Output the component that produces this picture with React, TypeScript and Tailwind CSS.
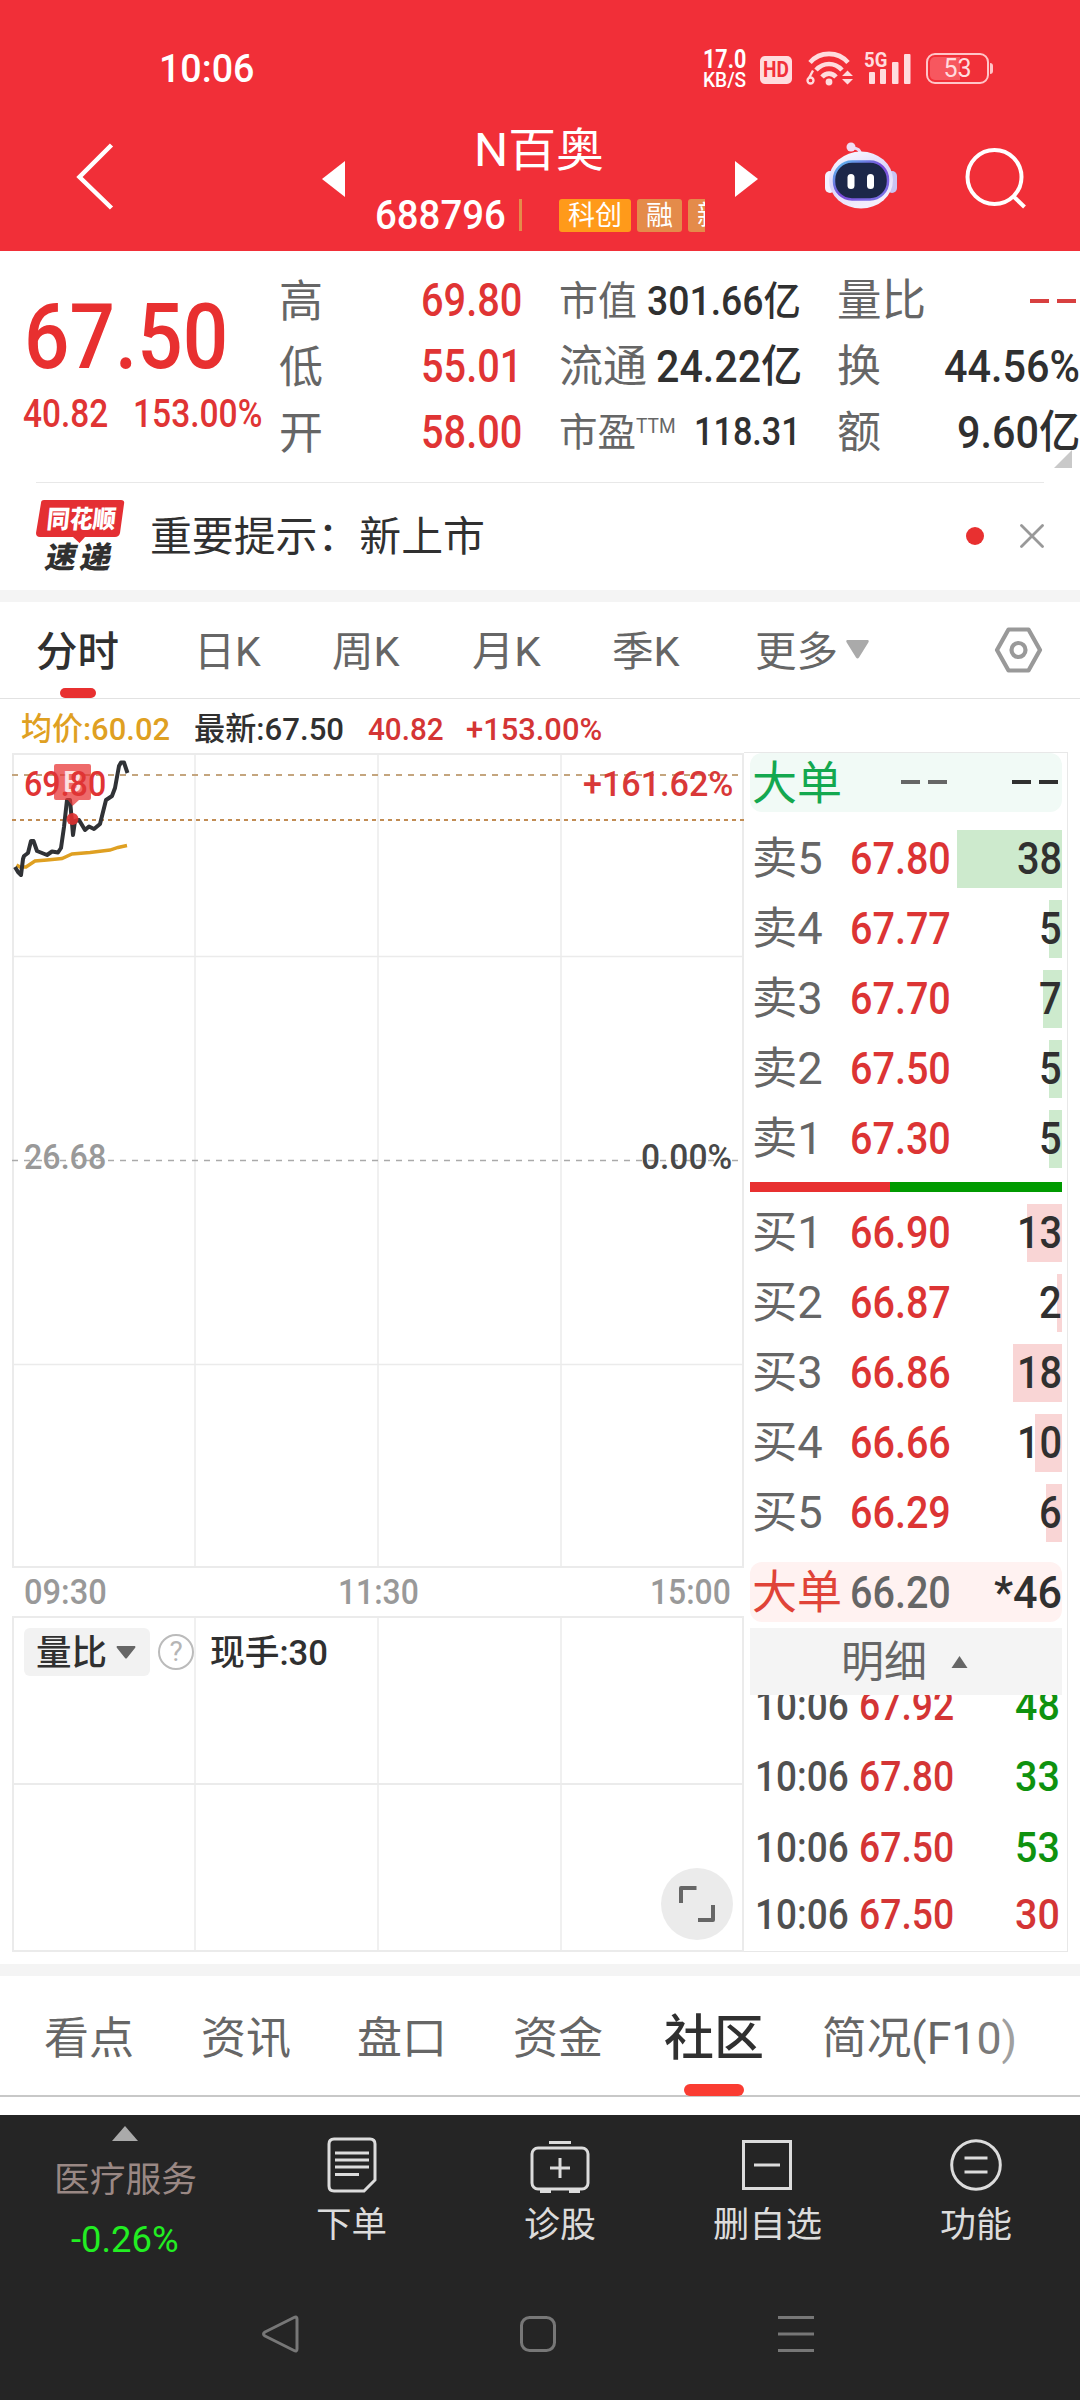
import { useLayoutEffect, useRef, useState } from "react";
import type { ReactNode } from "react";

/** A single line of text, condensed or widened to fill the width of its box. */
function Fit({ className = "", children }: { className?: string; children: ReactNode }) {
  const box = useRef<HTMLSpanElement>(null);
  const text = useRef<HTMLSpanElement>(null);
  const [scale, setScale] = useState(1);
  useLayoutEffect(() => {
    if (box.current && text.current) {
      setScale(box.current.clientWidth / text.current.offsetWidth);
    }
  }, []);
  return (
    <span ref={box} className={`block shrink-0 whitespace-nowrap ${className}`}>
      <span ref={text} className="inline-block origin-left" style={{ transform: `scaleX(${scale})` }}>
        {children}
      </span>
    </span>
  );
}

function StatusBar() {
  return (
    <div className="flex h-[110px] shrink-0 items-start">
      <Fit className="mt-[47px] ml-[159px] w-[95px] text-[38px] leading-[44px] font-medium">10:06</Fit>
      <div className="mt-[48px] ml-[449px] flex w-[44px] flex-col font-bold">
        <Fit className="w-[43px] text-[25px] leading-[24px]">17.0</Fit>
        <Fit className="w-[43px] text-[20px] leading-[17px] font-medium">KB/S</Fit>
      </div>
      <div className="mt-[56px] ml-[13px] flex h-[28px] w-[32px] justify-center rounded-[5px] bg-[#ffdcde]">
        <Fit className="w-[26px] text-[22px] leading-[28px] font-bold text-[#f12f38]">HD</Fit>
      </div>
      <svg className="mt-[50px] ml-[14px] h-[36px] w-[48px]" viewBox="0 0 48 36" fill="none" stroke="#ffdcde" strokeWidth="4.6">
        <path d="M4 12.5C14 1 32 1 42 12.5" />
        <path d="M10 20C17.5 12 28.500 12 36 20" />
        <path d="M16 27C20 22.500 26 22.500 30 27" />
        <circle cx="23" cy="32" r="3.4" fill="#ffdcde" stroke="none" />
        <circle cx="4.500" cy="30.500" r="3" strokeWidth="2.300" />
        <path d="M7 20.500L3 28" strokeWidth="2.300" />
        <path d="M36 26L41.500 20.500L47 26ZM36 29L41.500 34.500L47 29Z" fill="#ffdcde" stroke="none" />
      </svg>
      <div className="relative mt-[50px] ml-[10px] h-[36px] w-[50px]">
        <svg className="h-[36px] w-[50px]" viewBox="0 0 50 36" fill="#ffdcde">
          <rect x="5" y="22" width="6" height="12" rx="1" />
          <rect x="16" y="19" width="6" height="15" rx="1" />
          <rect x="28" y="12" width="6.500" height="22" rx="1" />
          <rect x="40" y="4" width="6.500" height="30" rx="1" />
        </svg>
        <div className="absolute top-[-1px] left-0">
          <Fit className="w-[23px] text-[21px] leading-[22px] font-bold text-[#ffdcde]">5G</Fit>
        </div>
      </div>
      <div className="mt-[53px] ml-[12px] flex h-[31px] w-[63px] justify-center rounded-[9px] border-[2.500px] border-[#ffc5c8] bg-[#f12f38] p-[2px]">
        <div className="flex w-full justify-center rounded-[5px] bg-linear-to-r from-[#f7575f] from-55% to-transparent to-55%">
          <Fit className="w-[28px] text-[25px] leading-[23px] text-[#ffdcde]">53</Fit>
        </div>
      </div>
      <div className="mt-[63px] ml-[1px] h-[11px] w-[3px] rounded-r bg-[#ffc5c8]" />
    </div>
  );
}

function Robot() {
  return (
    <svg className="mt-[31px] ml-[65px] h-[70px] w-[76px] shrink-0" viewBox="0 0 76 70">
      <defs>
        <linearGradient id="shell" x1="0" y1="0" x2="0.400" y2="1">
          <stop offset="0" stopColor="#ffffff" />
          <stop offset="0.550" stopColor="#dcd5fa" />
          <stop offset="1" stopColor="#f3eefc" />
        </linearGradient>
        <linearGradient id="ring" x1="0" y1="0" x2="1" y2="1">
          <stop offset="0" stopColor="#58c4f0" />
          <stop offset="0.500" stopColor="#7a48d8" />
          <stop offset="1" stopColor="#7b7be8" />
        </linearGradient>
      </defs>
      <path d="M37 15C38 9 35 7 28 7" fill="none" stroke="#ead9f5" strokeWidth="3" />
      <circle cx="28" cy="6" r="4.500" fill="#f0dcf4" />
      <rect x="2" y="30" width="10" height="22" rx="5" fill="#f4f2ff" />
      <rect x="64" y="30" width="10" height="22" rx="5" fill="#c9c4f2" />
      <ellipse cx="38" cy="39" rx="32" ry="28.500" fill="url(#shell)" />
      <rect x="11" y="20.500" width="54" height="38" rx="18" fill="#1c2749" stroke="url(#ring)" strokeWidth="2.500" />
      <rect x="24.500" y="33" width="7" height="15" rx="3.500" fill="#fff" />
      <rect x="44" y="33" width="7" height="15" rx="3.500" fill="#fff" />
    </svg>
  );
}

function Header() {
  return (
    <header className="flex h-[251px] shrink-0 flex-col bg-[#f12f38] text-white">
      <StatusBar />
      <div className="flex h-[141px] items-start">
        <svg className="mt-[32px] ml-[74px] h-[68px] w-[42px] shrink-0" viewBox="0 0 42 68" fill="none" stroke="#fff" strokeWidth="4.500">
          <path d="M37.500 3L5.500 35L37.500 66" />
        </svg>
        <svg className="mt-[51px] ml-[206px] h-[36px] w-[23px] shrink-0" viewBox="0 0 23 36" fill="#fff">
          <path d="M23 0V36L0 18Z" />
        </svg>
        <div className="mt-[9px] ml-[29px] flex w-[332px] shrink-0 flex-col">
          <Fit className="ml-[100px] w-[130px] text-[46px] leading-[62px]">N百奥</Fit>
          <div className="mt-[14px] flex h-[40px] items-center">
            <Fit className="ml-px w-[131px] text-[41px] leading-[44px] font-medium">688796</Fit>
            <span className="ml-[13px] h-[32px] w-[3px] bg-[#e48b4a]" />
            <div className="ml-[37px] flex h-[33px] w-[146px] gap-[6px] overflow-hidden text-[27px] leading-[34px]">
              <span className="w-[72px] shrink-0 rounded-[3px] bg-[#ff9a1a] text-center">科创</span>
              <span className="w-[45px] shrink-0 rounded-[3px] bg-[#e48b4a] text-center">融</span>
              <span className="w-[45px] shrink-0 rounded-[3px] bg-[#e48b4a] text-center">新</span>
            </div>
          </div>
        </div>
        <svg className="mt-[51px] ml-[29px] h-[36px] w-[23px] shrink-0" viewBox="0 0 23 36" fill="#fff">
          <path d="M0 0V36L23 18Z" />
        </svg>
        <Robot />
        <svg className="mt-[37px] ml-[65px] h-[64px] w-[64px] shrink-0" viewBox="0 0 64 64" fill="none" stroke="#fff" strokeWidth="4">
          <circle cx="30.500" cy="30" r="27" />
          <path d="M49 49L60.500 60" />
        </svg>
      </div>
    </header>
  );
}

function Dashes({ className }: { className: string }) {
  return (
    <div className={`flex h-[4px] w-[46px] shrink-0 justify-between ${className}`}>
      <span className="w-[19px] bg-current" />
      <span className="w-[19px] bg-current" />
    </div>
  );
}

function Quote() {
  return (
    <section className="flex h-[231px] shrink-0 text-[#e03434]">
      <div className="flex w-[279px] shrink-0 flex-col">
        <Fit className="mt-[41px] ml-[24px] w-[204px] text-[91px] leading-[90px] font-medium text-[#e83030]">67.50</Fit>
        <div className="mt-[10px] flex text-[38.500px] leading-[44px] font-medium">
          <Fit className="ml-[23px] w-[85px]">40.82</Fit>
          <Fit className="ml-[25px] w-[129px]">153.00%</Fit>
        </div>
      </div>
      <div className="mt-[17px] flex w-[280px] shrink-0 flex-col text-[46px] leading-[66px] font-medium">
        {[["高", "69.80"], ["低", "55.01"], ["开", "58.00"]].map(([k, v]) => (
          <div key={k} className="flex h-[66px]">
            <span className="w-[142px] text-[44px] leading-[68px] font-normal text-[#666]">{k}</span>
            <Fit className="w-[101px] leading-[65px]">{v}</Fit>
          </div>
        ))}
      </div>
      <div className="mt-[17px] flex w-[278px] shrink-0 flex-col leading-[67px] text-[#666]">
        <div className="flex h-[66px]">
          <Fit className="w-[78px] text-[40px] font-normal">市值</Fit>
          <Fit className="ml-[10px] w-[154px] text-[40px] font-medium text-[#303030]">301.66亿</Fit>
        </div>
        <div className="flex h-[66px]">
          <Fit className="w-[88px] text-[44px] font-normal">流通</Fit>
          <Fit className="ml-[9px] w-[146px] text-[44px] leading-[66px] font-medium text-[#303030]">24.22亿</Fit>
        </div>
        <div className="flex h-[66px]">
          <Fit className="w-[77px] text-[39px] font-normal">市盈</Fit>
          <Fit className="w-[40px] text-[21px] leading-[52px] font-normal">TTM</Fit>
          <Fit className="ml-[18px] w-[107px] text-[39px] leading-[65px] font-medium text-[#303030]">118.31</Fit>
        </div>
      </div>
      <div className="relative mt-[17px] flex w-[243px] shrink-0 flex-col text-[44px] leading-[67px] text-[#666]">
        <div className="flex h-[66px] items-center justify-between">
          <Fit className="w-[89px]">量比</Fit>
          <Dashes className="mr-[4px] text-[#d84040]" />
        </div>
        <div className="flex h-[66px] justify-between">
          <span>换</span>
          <Fit className="w-[136px] text-[45px] leading-[66px] font-medium text-[#303030]">44.56%</Fit>
        </div>
        <div className="flex h-[66px] justify-between">
          <span>额</span>
          <Fit className="w-[123px] text-[45px] leading-[65px] font-medium text-[#303030]">9.60亿</Fit>
        </div>
        <svg className="absolute top-[182px] left-[217px] h-[18px] w-[18px]" viewBox="0 0 18 18" fill="#c9c9c9">
          <path d="M18 0V18H0Z" />
        </svg>
      </div>
    </section>
  );
}

function Notice() {
  return (
    <section className="flex h-[108px] shrink-0 flex-col">
      <div className="mx-[36px] h-px bg-[#e8e8e8]" />
      <div className="flex h-[107px] items-center pr-[36px] pl-[36px]">
        <div className="flex h-[74px] w-[90px] shrink-0 flex-col">
          <div className="relative flex h-[37px] justify-center">
            <svg className="absolute h-[43px] w-[90px]" viewBox="0 0 90 43" fill="#e42f33">
              <path d="M8 0H85Q89 0 88 4L84 33Q83 37 79 37H49L43.500 43L37 37H4Q0 37 0 33L5 3Q5 0 8 0Z" />
            </svg>
            <div className="relative -skew-x-6">
              <Fit className="w-[69px] text-[25px] leading-[39px] font-black text-white">同花顺</Fit>
            </div>
          </div>
          <div className="ml-[10px] flex w-[66px] -skew-x-12 justify-between text-[30px] leading-[42px] font-black text-[#303030]">
            <Fit className="w-[31px]">速</Fit>
            <Fit className="w-[31px]">递</Fit>
          </div>
        </div>
        <Fit className="ml-[24px] w-[335px] text-[41px] leading-[58px] text-[#303030]">重要提示：新上市</Fit>
        <span className="-mt-[2px] ml-auto h-[18px] w-[18px] rounded-full bg-[#e83030]" />
        <svg className="-mt-px ml-[36px] h-[24px] w-[24px]" viewBox="0 0 24 24" stroke="#999" strokeWidth="2.800" strokeLinecap="round">
          <path d="M1.500 1.500L22.500 22.500M22.500 1.500L1.500 22.500" />
        </svg>
      </div>
    </section>
  );
}

function PeriodTabs() {
  return (
    <nav className="flex h-[97px] shrink-0 items-start border-b border-[#e2e2e2] text-[41px] leading-[101px] text-[#666]">
      <div className="ml-[36px] flex w-[83px] flex-col items-center font-medium text-[#303030]">
        <Fit className="h-[86px] w-[83px]">分时</Fit>
        <span className="h-[10px] w-[36px] rounded-full bg-[#e83030]" />
      </div>
      <Fit className="ml-[75px] w-[67px]">日K</Fit>
      <Fit className="ml-[71px] w-[68px]">周K</Fit>
      <Fit className="ml-[72px] w-[69px]">月K</Fit>
      <Fit className="ml-[71px] w-[68px]">季K</Fit>
      <Fit className="ml-[75px] w-[83px]">更多</Fit>
      <svg className="mt-[38px] ml-[8px] h-[19px] w-[23px]" viewBox="0 0 23 19" fill="#aaa">
        <path d="M1 0H22Q23.500 1 22 3L13 17.500Q11.500 19.500 10 17.500L1 3Q-0.500 1 1 0Z" />
      </svg>
      <svg className="mt-[24px] ml-[125px] h-[48px] w-[49px]" viewBox="0 0 49 48" fill="none" stroke="#999" strokeWidth="4.200" strokeLinejoin="round">
        <path d="M14.500 3.500H34.500L46 24L34.500 44.500H14.500L3 24Z" />
        <circle cx="24.500" cy="24" r="7" />
      </svg>
    </nav>
  );
}

function PriceChart() {
  return (
    <div className="relative h-[815px] w-[732px]">
      <svg className="h-[815px] w-[732px]" viewBox="0 0 732 815" fill="none">
        <g stroke="#ebebeb" strokeWidth="2">
          <path d="M1 0V814H731V1H0" />
          <path d="M183 0V814M366 0V814M549 0V814" strokeWidth="1.500" />
          <path d="M0 203.500H732M0 611.500H732" strokeWidth="1.300" />
        </g>
        <path d="M0 22H726" stroke="#c4a57e" strokeWidth="2" strokeDasharray="6 6" />
        <path d="M0 67H732" stroke="#c18c54" strokeWidth="2" strokeDasharray="4 4" />
        <path d="M0 407.500H726" stroke="#aaa" strokeWidth="1.600" strokeDasharray="6 6" />
        <path d="M4.500 112L8 114L14 114L23 108L35 107L50 105.500L60 101L78 99.500L98 97L106 94.500L115 92.500" stroke="#dfa022" strokeWidth="3.400" />
        <path
          d="M3 114L6 119L9 122L11 106L12 103L16 100L19 88L21.500 88L25 98L35 102L40 98.500L46 99.500L49 95L52 74L55 47H58L59.500 64L61 82L63 68L67 67L73 77L77 73.500L82 76L88 71L91 59L94 47L100 43L103 35L107 13L109 9.500H112L115.500 20"
          stroke="#303236"
          strokeWidth="4"
          strokeLinejoin="round"
        />
        <path d="M44 11H77Q79 11 79 13V45Q79 47 77 47H67L60.500 53L56 47H44Q42 47 42 45V13Q42 11 44 11Z" fill="#e83030" fillOpacity="0.720" />
        <circle cx="60.500" cy="66" r="6" fill="#e03030" fillOpacity="0.900" />
      </svg>
      <div className="absolute top-[13px] left-[51px] text-[30px] leading-[32px] font-medium text-white/80">B</div>
      <div className="absolute top-[10px] left-[12px]">
        <Fit className="w-[82px] text-[35px] leading-[44px] font-medium text-[#e03434]">69.80</Fit>
      </div>
      <div className="absolute top-[9px] left-[571px]">
        <Fit className="w-[150px] text-[35px] leading-[45px] font-medium text-[#d93838]">+161.62%</Fit>
      </div>
      <div className="absolute top-[383px] left-[12px]">
        <Fit className="w-[82px] text-[35px] leading-[44px] font-medium text-[#999]">26.68</Fit>
      </div>
      <div className="absolute top-[383px] left-[629px]">
        <Fit className="w-[91px] text-[35px] leading-[44px] font-medium text-[#484848]">0.00%</Fit>
      </div>
    </div>
  );
}

function VolumeChart() {
  return (
    <div className="relative h-[336px] w-[732px]">
      <svg className="h-[336px] w-[732px]" viewBox="0 0 732 336" fill="none" stroke="#ebebeb" strokeWidth="2">
        <path d="M1 1H731V335H1ZM0 168H732" />
        <path d="M183 0V335M366 0V335M549 0V335" strokeWidth="1.500" />
      </svg>
      <div className="absolute top-[12px] left-[12px] flex h-[48px] items-center text-[#303030]">
        <div className="flex h-[48px] w-[126px] items-center rounded-[6px] bg-[#f2f2f2]">
          <Fit className="ml-[12px] h-[48px] w-[71px] text-[35px] leading-[51px] font-medium">量比</Fit>
          <svg className="ml-[9px] h-[13px] w-[20px]" viewBox="0 0 20 13" fill="#666">
            <path d="M1 0H19Q20 1 19 2L11 12Q10 13 9 12L1 2Q0 1 1 0Z" />
          </svg>
        </div>
        <span className="ml-[8px] flex h-[36px] w-[36px] items-center justify-center rounded-full border-[2.500px] border-[#bbb] text-[28px] leading-[34px] text-[#b5b5b5]">?</span>
        <Fit className="ml-[16px] h-[48px] w-[118px] text-[35px] leading-[51px] font-medium">现手:30</Fit>
      </div>
      <div className="absolute top-[252px] left-[649px] flex h-[72px] w-[72px] items-center justify-center rounded-full bg-[#ebebeb]">
        <svg className="h-[38px] w-[38px]" viewBox="0 0 38 38" fill="none" stroke="#666" strokeWidth="4" strokeLinejoin="round">
          <path d="M3 18V3H18.500M35 20V35H20" />
        </svg>
      </div>
    </div>
  );
}

type Level = { name: string; price: string; qty: string; bar: number };

const asks: Level[] = [
  { name: "卖5", price: "67.80", qty: "38", bar: 105 },
  { name: "卖4", price: "67.77", qty: "5", bar: 13 },
  { name: "卖3", price: "67.70", qty: "7", bar: 19 },
  { name: "卖2", price: "67.50", qty: "5", bar: 13 },
  { name: "卖1", price: "67.30", qty: "5", bar: 13 },
];

const bids: Level[] = [
  { name: "买1", price: "66.90", qty: "13", bar: 35 },
  { name: "买2", price: "66.87", qty: "2", bar: 5 },
  { name: "买3", price: "66.86", qty: "18", bar: 49 },
  { name: "买4", price: "66.66", qty: "10", bar: 27 },
  { name: "买5", price: "66.29", qty: "6", bar: 16 },
];

function LevelRow({ level, barClass }: { level: Level; barClass: string }) {
  return (
    <div className="relative flex h-[58px] text-[45px] leading-[58px]">
      <div className={`absolute top-0 right-0 h-[58px] ${barClass}`} style={{ width: level.bar }} />
      <Fit className="relative ml-[2px] w-[71px] text-[44px] font-normal text-[#666]">{level.name}</Fit>
      <Fit className="relative ml-[27px] w-[101px] font-medium text-[#dc3434]">{level.price}</Fit>
      <div className="relative ml-auto font-medium text-[#303030]">
        {level.qty.length === 2 ? <Fit className="w-[45px]">{level.qty}</Fit> : <Fit className="w-[23px]">{level.qty}</Fit>}
      </div>
    </div>
  );
}

const trades = [
  { price: "67.92", qty: "48", tone: "text-[#0f920f]", step: "h-[71px]" },
  { price: "67.80", qty: "33", tone: "text-[#0f920f]", step: "h-[71px]" },
  { price: "67.50", qty: "53", tone: "text-[#0f920f]", step: "h-[67px]" },
  { price: "67.50", qty: "30", tone: "text-[#d43535]", step: "h-[60px]" },
];

function OrderBook() {
  return (
    <div className="flex h-[1200px] w-[324px] shrink-0 flex-col border border-l-0 border-[#e8e8e8] pr-[5px] pl-[6px]">
      <div className="flex h-[59px] items-center rounded-[12px] bg-[#f1faf6]">
        <Fit className="ml-[2px] w-[90px] text-[46px] leading-[56px] text-[#14a84f]">大单</Fit>
        <Dashes className="-mt-[2px] ml-[59px] text-[#666]" />
        <Dashes className="-mt-[2px] ml-[65px] text-[#303030]" />
      </div>
      <div className="mt-[18px] flex flex-col gap-[12px]">
        {asks.map((level) => (
          <LevelRow key={level.name} level={level} barClass="bg-[#cdeacd]" />
        ))}
      </div>
      <div className="mt-[14px] flex h-[10px]">
        <span className="w-[140px] bg-[#e83030]" />
        <span className="flex-1 bg-[#009a00]" />
      </div>
      <div className="mt-[12px] flex flex-col gap-[12px]">
        {bids.map((level) => (
          <LevelRow key={level.name} level={level} barClass="bg-[#f9d5d5]" />
        ))}
      </div>
      <div className="mt-[20px] flex h-[60px] items-center rounded-[12px] bg-[#fff2f1] text-[45px] leading-[57px] font-medium">
        <Fit className="ml-[2px] w-[90px] text-[46px] font-normal text-[#e04338]">大单</Fit>
        <Fit className="ml-[8px] w-[101px] text-[#666]">66.20</Fit>
        <Fit className="ml-auto w-[68px] text-[#303030]">*46</Fit>
      </div>
      <div className="mt-[6px] flex h-[67px] shrink-0 items-center bg-[#f4f4f4]">
        <Fit className="ml-[91px] w-[86px] text-[43px] leading-[66px] font-normal text-[#666]">明细</Fit>
        <svg className="ml-[24px] h-[12px] w-[17px]" viewBox="0 0 16 12" fill="#666">
          <path d="M0 12H16L8 0Z" />
        </svg>
      </div>
      <div className="flex flex-1 flex-col overflow-hidden">
        <div className="-mt-[17px] flex flex-col text-[42px] leading-[56px] font-medium">
          {trades.map((t, i) => (
            <div key={i} className={`flex shrink-0 ${t.step}`}>
              <Fit className="ml-[5px] w-[94px] text-[#505050]">10:06</Fit>
              <Fit className="ml-[10px] w-[95px] text-[#d43535]">{t.price}</Fit>
              <Fit className={`mr-[2px] ml-auto w-[45px] ${t.tone}`}>{t.qty}</Fit>
            </div>
          ))}
        </div>
      </div>
    </div>
  );
}

function Market() {
  return (
    <section className="flex h-[1265px] shrink-0">
      <div className="ml-[12px] flex w-[732px] shrink-0 flex-col">
        <div className="flex h-[54px] text-[32px] leading-[60px] font-medium">
          <Fit className="ml-[9px] w-[149px] text-[#dfa022]">均价:60.02</Fit>
          <Fit className="ml-[24px] w-[150px] text-[#303030]">最新:67.50</Fit>
          <Fit className="ml-[24px] w-[76px] text-[#d43535]">40.82</Fit>
          <Fit className="ml-[22px] w-[136px] text-[#d43535]">+153.00%</Fit>
        </div>
        <PriceChart />
        <div className="flex h-[48px] justify-between pr-[13px] pl-[12px] text-[35px] leading-[50px] font-medium text-[#999]">
          <Fit className="w-[83px]">09:30</Fit>
          <Fit className="w-[81px]">11:30</Fit>
          <Fit className="w-[81px]">15:00</Fit>
        </div>
        <VolumeChart />
      </div>
      <div className="pt-[53px]">
        <OrderBook />
      </div>
    </section>
  );
}

function SectionTabs() {
  return (
    <nav className="flex h-[121px] shrink-0 items-start border-b-2 border-[#c8c8c8] text-[44px] leading-[126px] font-normal text-[#666]">
      <Fit className="ml-[44px] w-[90px]">看点</Fit>
      <Fit className="ml-[67px] w-[90px]">资讯</Fit>
      <Fit className="ml-[66px] w-[90px]">盘口</Fit>
      <Fit className="ml-[66px] w-[90px]">资金</Fit>
      <div className="ml-[61px] flex w-[100px] flex-col items-center">
        <Fit className="h-[108px] w-[100px] text-[49px] font-medium text-[#303030]">社区</Fit>
        <span className="h-[12px] w-[60px] rounded-full bg-[#fa3c32]" />
      </div>
      <Fit className="ml-[58px] w-[195px]">
        简况(F1<span className="text-[#7a7a7a]">0</span>
        <span className="text-[#a0a0a0]">)</span>
      </Fit>
    </nav>
  );
}

function BottomBar() {
  return (
    <footer className="flex h-[285px] shrink-0 flex-col bg-[#252525] text-[#dcdcdc]">
      <div className="flex h-[175px] text-[35px] leading-[46px]">
        <div className="ml-[53px] flex w-[144px] flex-col items-center">
          <svg className="mt-[11px] h-[15px] w-[26px]" viewBox="0 0 26 15" fill="#aaa">
            <path d="M0 15H26L13 0Z" />
          </svg>
          <Fit className="mt-[17px] w-[143px] text-[#9a8884]">医疗服务</Fit>
          <Fit className="mt-[13px] w-[108px] text-[36px] text-[#22ee22]">-0.26%</Fit>
        </div>
        <div className="ml-[118px] flex w-[73px] flex-col items-center">
          <svg className="mt-[22px] h-[56px] w-[50px]" viewBox="0 0 50 56" fill="none" stroke="currentColor" strokeWidth="3">
            <path d="M7 2H43Q48 2 48 7V43L37 54H7Q2 54 2 49V7Q2 2 7 2Z" />
            <path d="M8 16H42M8 23H42M8 30H42M8 37.500H32" />
          </svg>
          <Fit className="mt-[10px] w-[71px]">下单</Fit>
        </div>
        <div className="ml-[135px] flex w-[73px] flex-col items-center">
          <svg className="mt-[25px] h-[53px] w-[60px]" viewBox="0 0 60 53" fill="none" stroke="currentColor" strokeWidth="3">
            <rect x="2" y="8" width="56" height="41" rx="6" />
            <path d="M19 2.500H41M30 18V38M20 28H40" />
            <path d="M10 51H21M39 51H50" strokeWidth="4" />
          </svg>
          <Fit className="mt-[10px] w-[72px]">诊股</Fit>
        </div>
        <div className="ml-[116px] flex w-[110px] flex-col items-center">
          <svg className="mt-[25px] h-[50px] w-[50px]" viewBox="0 0 50 50" fill="none" stroke="currentColor" strokeWidth="3">
            <path d="M1.500 1.500H48.500V48.500H1.500ZM12 25H38" />
          </svg>
          <Fit className="mt-[13px] w-[109px]">删自选</Fit>
        </div>
        <div className="ml-[117px] flex w-[73px] flex-col items-center">
          <svg className="mt-[24px] h-[52px] w-[52px]" viewBox="0 0 52 52" fill="none" stroke="currentColor" strokeWidth="3">
            <circle cx="26" cy="26" r="24.300" />
            <path d="M14.500 19H37.500M14.500 33H37.500" />
          </svg>
          <Fit className="mt-[12px] w-[72px]">功能</Fit>
        </div>
      </div>
      <div className="flex h-[110px] items-start pt-[25px] text-[#777]">
        <svg className="ml-[261px] h-[38px] w-[38px]" viewBox="0 0 38 38" fill="none" stroke="currentColor" strokeWidth="3" strokeLinejoin="round">
          <path d="M33 2.500Q36 1 36 4V34Q36 37 33 35.500L4 21Q1 19 4 17Z" />
        </svg>
        <svg className="ml-[220px] h-[38px] w-[38px]" viewBox="0 0 38 38" fill="none" stroke="currentColor" strokeWidth="3">
          <rect x="2.500" y="2.500" width="33" height="33" rx="8" />
        </svg>
        <svg className="ml-[220px] h-[38px] w-[38px]" viewBox="0 0 38 38" stroke="currentColor" strokeWidth="3">
          <path d="M1 2.500H37M1 19H37M1 35.500H37" />
        </svg>
      </div>
    </footer>
  );
}

export default function App() {
  return (
    <main className="flex h-[2400px] w-[1080px] flex-col overflow-hidden bg-white font-['Roboto','Noto_Sans_CJK_SC',sans-serif]">
      <Header />
      <Quote />
      <Notice />
      <div className="h-[12px] shrink-0 bg-[#f4f4f4]" />
      <PeriodTabs />
      <Market />
      <div className="h-[12px] shrink-0 bg-[#f4f4f4]" />
      <SectionTabs />
      <div className="h-[18px] shrink-0 bg-white" />
      <BottomBar />
    </main>
  );
}
